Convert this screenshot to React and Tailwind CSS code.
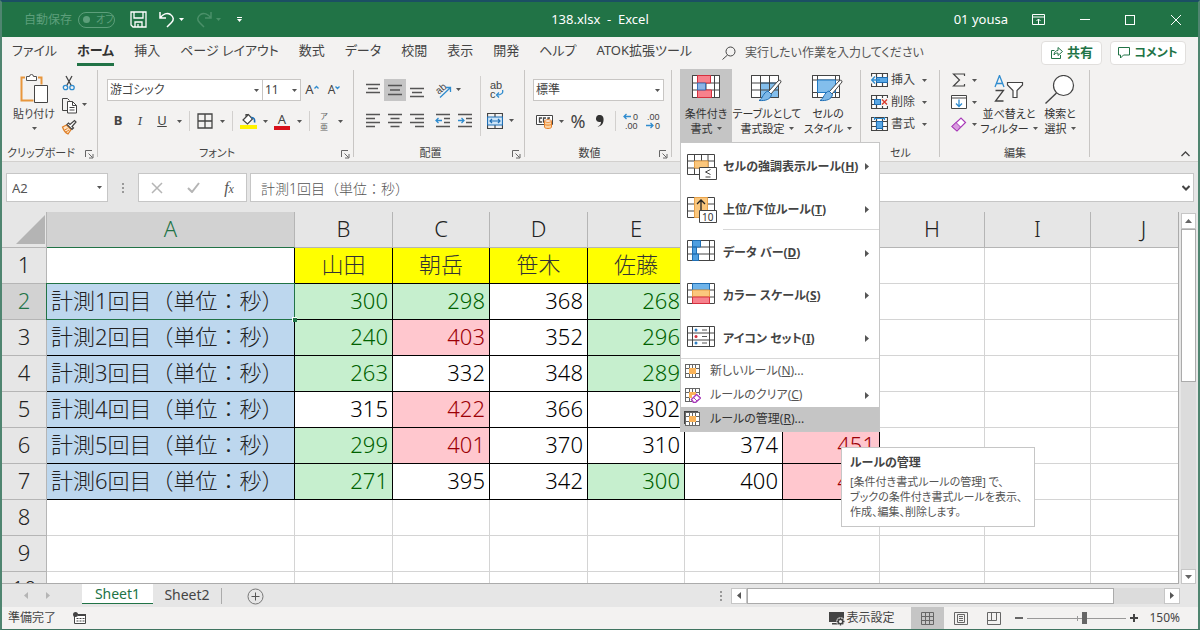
import { useState } from 'react'

const GREEN = '#217346'

// Small shared pieces
const Svg = ({ w = 16, h = 16, children, className = '' }) => (
  <svg width={w} height={h} viewBox={`0 0 ${w} ${h}`} fill="none"
    stroke="#444" strokeWidth="1" className={`shrink-0 ${className}`}>
    {children}
  </svg>
)

const Caret = ({ className = 'text-[#555]' }) => (
  <svg width="5" height="3" viewBox="0 0 5 3" className={`shrink-0 ${className}`}>
    <path d="M0 0h5L2.5 3z" fill="currentColor" />
  </svg>
)

const CaretButton = ({ label, className = 'w-3' }) => (
  <button aria-label={label} className={`flex h-5 items-center justify-center ${className}`}>
    <Caret />
  </button>
)

const Tool = ({ label, active, className = 'w-[22px]', children }) => (
  <button aria-label={label}
    className={`flex h-[22px] shrink-0 items-center justify-center ${active ? 'bg-[#c5c5c5]' : ''} ${className}`}>
    {children}
  </button>
)

const Divider = () => <span className="mx-1 h-5 w-px shrink-0 bg-[#d2d0ce]" />

const Launcher = () => (
  <Svg w={9} h={9}>
    <path d="M.5 7V.5H7M3.5 3.5l4 4M8 4v4H4" stroke="#666" />
  </Svg>
)

const Group = ({ title, launcher, className = '', children }) => (
  <section className={`relative flex shrink-0 flex-col ${className}`}>
    <div className="flex h-[77px] items-start">{children}</div>
    <div className={`relative flex h-4 items-center justify-center text-[11px] text-[#444] ${launcher ? 'pr-[18px]' : ''}`}>
      {title}
      {launcher && (
        <button aria-label={`${title}の設定`} className="absolute right-1 bottom-0.5">
          <Launcher />
        </button>
      )}
    </div>
    <span className="absolute top-0.5 right-0 bottom-1 w-px bg-[#c8c6c4]" />
  </section>
)

// Ribbon icons
const PasteIcon = () => (
  <Svg w={28} h={31}>
    <path d="M5 4.500H1.500v23h12M18 4.500h3.500v7" stroke="#e8963c" strokeWidth="2" />
    <path d="M6.500 7.500v-4h3a2 2 0 014 0h3v4z" fill="#fff" stroke="#555" />
    <path d="M14.500 12.500h13v17h-13z" fill="#fff" />
  </Svg>
)

const CutIcon = () => (
  <Svg w={14} h={16}>
    <path d="M4 1l5.500 10M10 1L4.500 11" strokeWidth="1.300" />
    <circle cx="3.500" cy="12.500" r="2.200" stroke="#2f8ccf" strokeWidth="1.300" />
    <circle cx="10" cy="12.500" r="2.200" stroke="#2f8ccf" strokeWidth="1.300" />
  </Svg>
)

const CopyIcon = () => (
  <Svg w={17} h={17}>
    <path d="M6 13.500H1.500V1.500h5l2 2" />
    <path d="M6.500 4.500h5l4 4v7.500h-9z" fill="#fff" />
    <path d="M11.500 4.500v4h4M8.500 10.500h5M8.500 13h5" />
  </Svg>
)

const BrushIcon = () => (
  <Svg w={16} h={16}>
    <path d="M1.500 8l4-2 4.500 4.500-3 4.500C5 14 2.500 11 1.500 8z" fill="#fde3c4" stroke="#e0812a" strokeWidth="1.300" />
    <path d="M3.500 11l3-1.500M5 13l3-2" stroke="#e0812a" />
    <path d="M6 5.500l5 5 1.500-1.500L11 7.500l4-4.500-1.500-1.500-4.500 4L7.500 4z" fill="#fff" strokeWidth="1.200" />
  </Svg>
)

const LINES = {
  top: 'M1 2.500h14M3 6.500h10M1 10.500h14',
  middle: 'M1 3.500h14M3 8h10M1 12.500h14',
  bottom: 'M1 6.500h14M3 10.500h10M1 14.500h14',
  left: 'M1 1.500h14M1 5.500h9M1 9.500h14M1 13.500h9',
  center: 'M1 1.500h14M3.500 5.500h9M1 9.500h14M3.500 13.500h9',
  right: 'M1 1.500h14M6 5.500h9M1 9.500h14M6 13.500h9',
  indent: 'M1 1.500h14M9 5.500h6M9 9.500h6M1 13.500h14',
}

const Lines = ({ kind, children }) => (
  <Svg>
    <path d={LINES[kind]} stroke="#555" strokeWidth="1.300" />
    {children}
  </Svg>
)

const CondIcon = () => (
  <Svg w={28} h={24}>
    <path d="M.5.500h27v22H.5z" fill="#fff" />
    <path d="M.5.500h27v22H.5zM.5 8h27M.5 15h27M5.500.500v22M22.500.500v22M14 8v7" />
    <path d="M5.500.500h13V8h-13zM5.500 15h14v7.500h-14z" fill="#f7818c" stroke="#d5303e" />
    <path d="M5.500 8h8v7h-8z" fill="#8db4e6" stroke="#3b6fb5" />
  </Svg>
)

const Brush = () => (
  <>
    <path d="M30 7l-10 12-2.500-2.500L27 6q3-2 3 1z" fill="#fff" />
    <path d="M17 16l3.500 3.500c-1 5-6 6.500-12.500 6 4-2 4-8 9-9.500z" fill="#7db8e8" stroke="#1f6fb5" />
  </>
)

const TableIcon = () => (
  <Svg w={32} h={27}>
    <path d="M.5.500h27v22H.5z" fill="#fff" />
    <path d="M9.500 8h18v14.500h-18z" fill="#83beec" stroke="#1f77c0" />
    <path d="M.5.500h27v22H.5zM.5 8h27M.5 15h27M9.500.500v22M18.500.500v22" />
    <Brush />
  </Svg>
)

const CellStyleIcon = () => (
  <Svg w={32} h={27}>
    <path d="M.5.500h27v22H.5z" fill="#fff" />
    <path d="M.5.500h27v22H.5zM.5 5h27M.5 17.500h27M5.500.500v22M23.500.500v22" />
    <path d="M5.500 5h18v12.500h-18z" fill="#83beec" stroke="#1f77c0" />
    <Brush />
  </Svg>
)

const CellOpIcon = ({ kind }) => (
  <Svg w={17} h={15}>
    <path d="M.5.500h16v13H.5zM.5 4.500h16M.5 9.500h16M5.500.500v13M11.500.500v13" fill="#fff" strokeWidth="1.200" />
    {kind === 'insert' && (
      <>
        <path d="M5.500 4.500h11v5h-11z" fill="#5ba8e5" stroke="#1f6fb5" />
        <path d="M0 3.500h5v7H0z" fill="#f3f2f1" stroke="none" />
        <path d="M9 7H1M4 3.500L.7 7 4 10.500" stroke="#2f8ccf" strokeWidth="1.300" />
      </>
    )}
    {kind === 'delete' && (
      <>
        <path d="M3.500 4.500h6v5h-6z" fill="#5ba8e5" stroke="#1f6fb5" />
        <path d="M10 3h7v8h-7z" fill="#f3f2f1" stroke="none" />
        <path d="M11 4.500l5 5M16 4.500l-5 5" stroke="#d93a2b" strokeWidth="1.400" />
      </>
    )}
    {kind === 'format' && (
      <>
        <path d="M5.500 4.500h6v7h-6z" fill="#5ba8e5" stroke="#1f6fb5" />
        <path d="M3.500 0v3M13.500 0v3M4 1.500h9" stroke="#2f8ccf" strokeWidth="1.200" />
      </>
    )}
  </Svg>
)

// Menu icons
const MENU_ART = {
  highlight: (
    <>
      <path d="M.5.500h27v20H.5zM.5 7h27M.5 14h27M7.500.500v20M14.500.500V7M21 .5v20" />
      <path d="M7.500 7H21v7H7.500z" fill="#fbc77d" stroke="#e8a24a" />
      <path d="M12.500 13.500h17v12h-17z" fill="#fff" />
      <path d="M23.500 15.500l-5 2.500 5 2.500M18.500 23h5" />
    </>
  ),
  top: (
    <>
      <path d="M.5.500h27v20H.5zM.5 7h27M.5 14h27" />
      <path d="M7.500.500h13v20h-13z" fill="#fbc77d" stroke="#e8a24a" />
      <path d="M14 13V3M10 7l4-4 4 4" stroke="#222" strokeWidth="1.300" />
      <path d="M12.500 13.500h17v12h-17z" fill="#fff" />
      <text x="15" y="24" fontSize="10" fontWeight="400" fill="#333" stroke="none">10</text>
    </>
  ),
  bars: (
    <>
      <path d="M.5.500h27v20H.5zM.5 7h27M.5 14h27M5.500.500v20M22.500.500v20" />
      <path d="M5.500.500h8V7h-8zM5.500 7h4v7h-4zM5.500 14h6v6.500h-6z" fill="#4f9fe0" stroke="#1f6fb5" />
    </>
  ),
  scale: (
    <>
      <path d="M.5.500h27v20H.5zM.5 7h27M.5 14h27" />
      <path d="M5.500.500h17V7h-17z" fill="#6fb4ea" stroke="#1f6fb5" />
      <path d="M5.500 7h17v7h-17z" fill="#fbc77d" stroke="#e8a24a" />
      <path d="M5.500 14h17v6.500h-17z" fill="#f7818c" stroke="#d5303e" />
    </>
  ),
  icons: (
    <>
      <path d="M.5.500h27v20H.5zM.5 7h27M.5 14h27M5.500.500v20M22.500.500v20" />
      <path d="M15 4h5M15 10.500h5M15 17h5" stroke="#555" />
      <circle cx="9" cy="4" r="1.500" fill="#2f7fc4" stroke="none" />
      <circle cx="9" cy="10.500" r="1.500" fill="#d5303e" stroke="none" />
      <circle cx="9" cy="17" r="1.500" fill="#2f7fc4" stroke="none" />
    </>
  ),
}

const SmallRuleIcon = ({ kind }) => (
  <Svg w={17} h={16}>
    {kind === 'manage' && <path d="M.5 13V.5H14" strokeWidth="1.500" />}
    <path d="M1.500 1.500h14v13h-14z" fill="#fff" />
    <path d="M1.500 1.500h14v13h-14zM1.500 5.500h14M1.500 10.500h14M5.500 1.500v13M11.500 1.500v13M8.500 1.500v4M8.500 10.500v4" stroke="#666" />
    <path d="M5 5h7v6H5z" fill="#fbb45a" stroke="none" />
    {kind === 'clear' && (
      <>
        <path d="M8 8h9v8H8z" fill="#fff" stroke="none" />
        <path d="M7.500 12.500l5-5 4 3.500-5 4.500h-2z" fill="#fff" stroke="#a83ab8" strokeWidth="1.400" />
        <path d="M9.500 10.500l3.500 3.500" stroke="#a83ab8" />
      </>
    )}
  </Svg>
)

const RULES = [
  { art: 'highlight', text: 'セルの強調表示ルール', k: 'H' },
  { art: 'top', text: '上位/下位ルール', k: 'T' },
  { art: 'bars', text: 'データ バー', k: 'D', line: true },
  { art: 'scale', text: 'カラー スケール', k: 'S' },
  { art: 'icons', text: 'アイコン セット', k: 'I' },
]

const RULE_ACTIONS = [
  { kind: 'new', text: '新しいルール', k: 'N', dots: true },
  { kind: 'clear', text: 'ルールのクリア', k: 'C', arrow: true },
  { kind: 'manage', text: 'ルールの管理', k: 'R', dots: true, active: true },
]

const SubArrow = () => (
  <svg width="4" height="7" viewBox="0 0 4 7" className="mr-2.5 ml-auto shrink-0">
    <path d="M0 0l4 3.500L0 7z" fill="#555" />
  </svg>
)

const RulesMenu = () => (
  <div role="menu" className="absolute top-full left-0 z-20 w-[200px] border border-[#c6c6c6] bg-white text-left text-xs">
    {RULES.map(r => (
      <button key={r.k} role="menuitem" className="flex h-[43px] w-full items-center pl-[6px] font-bold text-[#444]">
        <Svg w={30} h={26} className="mt-1">{MENU_ART[r.art]}</Svg>
        <span className={`ml-[6px] flex h-full flex-1 items-center pt-1 ${r.line ? 'border-t border-[#d8d8d8]' : ''}`}>
          <span className="whitespace-nowrap">{r.text}(<u>{r.k}</u>)</span>
          <SubArrow />
        </span>
      </button>
    ))}
    <div className="border-t border-[#d8d8d8]">
      {RULE_ACTIONS.map(a => (
        <button key={a.k} role="menuitem"
          className={`flex h-6 w-full items-center pl-[3px] ${a.active ? 'bg-[#c5c5c5] text-[#333]' : 'text-[#555]'}`}>
          <SmallRuleIcon kind={a.kind} />
          <span className="ml-[9px]">{a.text}(<u>{a.k}</u>){a.dots && '...'}</span>
          {a.arrow && <SubArrow />}
        </button>
      ))}
    </div>

    <div role="tooltip" className="absolute top-[304px] left-40 w-[194px] border border-[#c6c6c6] bg-white px-2 py-[7px] text-xs leading-[15px] text-[#555]">
      <p className="mb-1 font-bold text-[#444]">ルールの管理</p>
      <p className="text-[11px] leading-[15px] whitespace-nowrap">
        [条件付き書式ルールの管理] で、<br />
        ブックの条件付き書式ルールを表示、<br />
        作成、編集、削除します。
      </p>
    </div>
  </div>
)

const BigButton = ({ icon, lines, active, className = '', ...rest }) => (
  <button {...rest}
    className={`flex h-[73px] flex-col items-center pt-[6px] text-[11px] leading-[15px] text-[#333] ${active ? 'bg-[#c5c5c5]' : ''} ${className}`}>
    <span className="flex h-[31px] items-start">{icon}</span>
    <span className="whitespace-nowrap">{lines[0]}</span>
    <span className="flex items-center gap-1 whitespace-nowrap">
      {lines[1]}
      <Caret />
    </span>
  </button>
)

const TitleBar = () => (
  <header className="grid h-[35px] shrink-0 grid-cols-[1fr_auto_1fr] items-center bg-[#217346] text-[13px] text-white">
    <div className="flex items-center pl-[22px] text-xs text-[#5d9f7b]">
      <span>自動保存</span>
      <button aria-label="自動保存" className="ml-1.5 flex h-4 w-[37px] items-center gap-1.5 rounded-full border border-[#5d9f7b] pl-1 text-[10px]">
        <span className="h-[7px] w-[7px] rounded-full bg-[#5d9f7b]" />
        オフ
      </button>
      <button aria-label="上書き保存" className="ml-[15px]">
        <svg width="17" height="17" viewBox="0 0 17 17" fill="none" stroke="#fff" strokeWidth="1.300">
          <path d="M1 1h15v15H3l-2-2zM4 1v6h9V1M5 16v-5h7v5M8 13v3" />
        </svg>
      </button>
      <button aria-label="元に戻す" className="ml-3">
        <svg width="16" height="17" viewBox="0 0 16 17" fill="none" stroke="#fff" strokeWidth="1.500">
          <path d="M1 1v6h6M1.500 6.500C4 3 8 1.500 11.500 3.500c3.500 2.500 3.500 5.500 1 8L8 16" />
        </svg>
      </button>
      <button aria-label="元に戻す履歴" className="ml-1"><Caret className="text-white" /></button>
      <button aria-label="やり直し" className="ml-3">
        <svg width="16" height="17" viewBox="0 0 16 17" fill="none" stroke="#4a9069" strokeWidth="1.500">
          <path d="M15 1v6H9M14.500 6.500C12 3 8 1.500 4.500 3.500c-3.500 2.500-3.500 5.500-1 8L8 16" />
        </svg>
      </button>
      <button aria-label="やり直し履歴" className="ml-1"><Caret className="text-[#4a9069]" /></button>
      <button aria-label="クイック アクセス ツール バーのカスタマイズ" className="ml-4 flex flex-col items-center gap-px">
        <span className="h-px w-[5px] bg-white" />
        <Caret className="text-white" />
      </button>
    </div>
    <h1 className="whitespace-pre">138.xlsx  -  Excel</h1>
    <div className="flex items-center justify-end pr-[17px]">
      <span>01 yousa</span>
      <button aria-label="リボンの表示オプション" className="ml-6">
        <svg width="13" height="11" viewBox="0 0 13 11" fill="none" stroke="#fff">
          <path d="M.5.500h12v10H.5zM.5 3h12M6.500 10V5M4.500 7l2-2 2 2" />
        </svg>
      </button>
      <button aria-label="最小化" className="ml-[35px] h-px w-[10px] bg-white" />
      <button aria-label="最大化" className="ml-[35px] h-[10px] w-[10px] border border-white" />
      <button aria-label="閉じる" className="ml-9">
        <svg width="10" height="10" viewBox="0 0 10 10" stroke="#fff"><path d="M0 0l10 10M10 0L0 10" /></svg>
      </button>
    </div>
  </header>
)

const TABS = ['ファイル', 'ホーム', '挿入', 'ページ レイアウト', '数式', 'データ', '校閲', '表示', '開発', 'ヘルプ', 'ATOK拡張ツール']

const Tabs = () => {
  const [tab, setTab] = useState('ホーム')
  return (
    <div className="flex h-[31px] shrink-0 items-center bg-[#f3f2f1] pr-3 pl-[10px] text-[13px] text-[#444]">
      <nav className="flex gap-5">
        {TABS.map(t => (
          <button key={t} onClick={() => setTab(t)}
            className={`h-[27px] border-b-[3px] whitespace-nowrap ${
              t === tab ? 'border-[#217346] font-bold text-[#333]' : 'border-transparent'
            }`}>
            {t}
          </button>
        ))}
      </nav>
      <label className="ml-[30px] flex flex-1 items-center gap-[9px]">
        <Svg w={14} h={14}>
          <circle cx="8.500" cy="5.500" r="4.500" />
          <path d="M5.500 9L.5 13.500" />
        </Svg>
        <input aria-label="操作アシスト" placeholder="実行したい作業を入力してください"
          className="w-full bg-transparent text-xs outline-none placeholder:text-[#555]" />
      </label>
      <div className="flex gap-2 font-bold text-[#217346]">
        <button className="flex h-6 w-[61px] items-center justify-center gap-1 rounded-sm border border-[#e1dfdd] bg-white">
          <Svg w={13} h={13}>
            <path d="M4.500 4.500h-3v8h9V9M4 9c0-3 2-4.500 4-4.500v-3l4.500 4-4.500 4v-2.500c-2 0-3 .5-4 2z" stroke={GREEN} />
          </Svg>
          共有
        </button>
        <button className="flex h-6 w-[76px] items-center justify-center gap-1 rounded-sm border border-[#e1dfdd] bg-white text-xs">
          <Svg w={12} h={12}><path d="M.5.500h11v7.500H5.500l-3 3V8h-2z" stroke={GREEN} /></Svg>
          コメント
        </button>
      </div>
    </div>
  )
}

const Ribbon = () => (
  <div className="relative flex h-[94px] shrink-0 border-b border-[#d2d0ce] bg-[#f3f2f1] text-[#444]">
    <Group title="クリップボード" launcher className="w-24">
      <button className="ml-2 flex w-12 flex-col items-center pt-[5px] text-[11px] leading-4 whitespace-nowrap">
        <PasteIcon />
        <span className="mt-0.5">貼り付け</span>
        <span className="flex h-3 items-center"><Caret /></span>
      </button>
      <div className="flex flex-col pt-1 text-xs">
        <Tool label="切り取り"><CutIcon /></Tool>
        <div className="flex">
          <Tool label="コピー"><CopyIcon /></Tool>
          <CaretButton label="コピーのオプション" className="w-2" />
        </div>
        <Tool label="書式のコピー/貼り付け"><BrushIcon /></Tool>
      </div>
    </Group>

    <Group title="フォント" launcher className="w-64">
      <div className="flex flex-col gap-[9px] pt-[11px] pl-[9px]">
        <div className="flex items-center text-[13px]">
          <span className="relative flex items-center">
            <select aria-label="フォント" className="h-[22px] w-[156px] appearance-none border border-[#c8c6c4] bg-white px-0.5 text-xs">
              <option>游ゴシック</option>
            </select>
            <Caret className="pointer-events-none absolute right-1 text-[#555]" />
          </span>
          <span className="relative flex items-center">
            <select aria-label="フォント サイズ" className="h-[22px] w-[38px] appearance-none border border-l-0 border-[#c8c6c4] bg-white px-0.5 text-xs">
              <option>11</option>
            </select>
            <Caret className="pointer-events-none absolute right-1 text-[#555]" />
          </span>
          <Tool label="フォント サイズの拡大">
            <span>A</span>
            <Svg w={5} h={10}><path d="M.5 3.500l2-2 2 2" stroke="#2f8ccf" strokeWidth="1.300" /></Svg>
          </Tool>
          <Tool label="フォント サイズの縮小">
            <span className="text-xs">A</span>
            <Svg w={5} h={10}><path d="M.5 1.500l2 2 2-2" stroke="#2f8ccf" strokeWidth="1.300" /></Svg>
          </Tool>
        </div>
        <div className="flex items-center text-[13px]">
          <Tool label="太字"><b>B</b></Tool>
          <Tool label="斜体"><i className="font-serif">I</i></Tool>
          <Tool label="下線"><u>U</u></Tool>
          <CaretButton label="下線のオプション" />
          <Divider />
          <Tool label="罫線"><Svg><path d="M1 1h14v14H1zM8 1v14M1 8h14" strokeWidth="1.300" /></Svg></Tool>
          <CaretButton label="罫線のオプション" />
          <Divider />
          <Tool label="塗りつぶしの色">
            <Svg w={17} h={17}>
              <path d="M8.500 1.500L3 7l4.500 4 5-5-4-4.500zM6 4V1.500h2" fill="#fff" strokeWidth="1.200" />
              <path d="M11 4.500c3-.5 4 2 3.500 5" stroke="#1f6fb5" strokeWidth="1.600" />
              <path d="M0 12h17v4H0z" fill="#fff200" stroke="none" />
            </Svg>
          </Tool>
          <CaretButton label="塗りつぶしの色のオプション" />
          <Tool label="フォントの色" className="w-[22px] flex-col">
            <span className="leading-[13px]">A</span>
            <span className="h-1 w-4 bg-[#d8111b]" />
          </Tool>
          <CaretButton label="フォントの色のオプション" />
          <Divider />
          <Tool label="ふりがな" className="w-5 flex-col text-[8px] leading-[11px] text-[#666]">
            <span>ア</span>
            <span>亜</span>
          </Tool>
          <CaretButton label="ふりがなのオプション" />
        </div>
      </div>
    </Group>

    <Group title="配置" launcher className="w-[171px]">
      <div className="flex flex-col gap-[9px] pt-[11px] pl-2">
        <div className="flex">
          <Tool label="上揃え"><Lines kind="top" /></Tool>
          <Tool label="上下中央揃え" active><Lines kind="middle" /></Tool>
          <Tool label="下揃え"><Lines kind="bottom" /></Tool>
          <Tool label="方向" className="ml-1 w-[22px]">
            <Svg w={18} h={20} className="font-['Liberation_Sans',sans-serif]">
              <text x="2" y="13" fontSize="10" fill="#444" stroke="none" transform="rotate(-40 6 10)">ab</text>
              <path d="M6 17.500L16 8M12 7.500h4.500V12" stroke="#2f8ccf" strokeWidth="1.300" />
            </Svg>
          </Tool>
          <CaretButton label="方向のオプション" className="w-2" />
        </div>
        <div className="flex">
          <Tool label="左揃え"><Lines kind="left" /></Tool>
          <Tool label="中央揃え"><Lines kind="center" /></Tool>
          <Tool label="右揃え"><Lines kind="right" /></Tool>
          <Tool label="インデントを減らす" className="ml-1 w-[22px]">
            <Lines kind="indent"><path d="M7 7.500H1M3.500 5L1 7.500 3.500 10" stroke="#2f8ccf" strokeWidth="1.300" /></Lines>
          </Tool>
          <Tool label="インデントを増やす">
            <Lines kind="indent"><path d="M1 7.500h6M4.500 5L7 7.500 4.500 10" stroke="#2f8ccf" strokeWidth="1.300" /></Lines>
          </Tool>
        </div>
      </div>
      <span className="mt-2 ml-1 h-[60px] w-px bg-[#d2d0ce]" />
      <div className="flex flex-col gap-[9px] pt-[11px] pl-1">
        <Tool label="折り返して全体を表示する">
          <Svg w={15} h={22} className="font-['Liberation_Sans',sans-serif]">
            <text x="1" y="10" fontSize="11" fill="#444" stroke="none">ab</text>
            <text x="1" y="19" fontSize="11" fill="#444" stroke="none">c</text>
            <path d="M13.500 11c1 3-1 5-6 5M10 13.500L7.500 16l2.500 2.500" stroke="#2f8ccf" strokeWidth="1.300" />
          </Svg>
        </Tool>
        <div className="flex">
          <Tool label="セルを結合して中央揃え" className="w-5">
            <Svg>
              <path d="M.5.500h15v15H.5zM8 .5V4M8 12v3.500" strokeWidth="1.200" />
              <path d="M.5 4h15v8H.5z" fill="#cfe6f8" stroke="#1f6fb5" strokeWidth="1.200" />
              <path d="M3 8h10M5 6L3 8l2 2M11 6l2 2-2 2" stroke="#1f6fb5" strokeWidth="1.200" />
            </Svg>
          </Tool>
          <CaretButton label="結合のオプション" />
        </div>
      </div>
    </Group>

    <Group title="数値" launcher className="w-[147px]">
      <div className="flex flex-col gap-[9px] pt-[11px] pl-2">
        <span className="relative flex items-center">
          <select aria-label="表示形式" className="h-[22px] w-[131px] appearance-none border border-[#c8c6c4] bg-white px-0.5 text-xs">
            <option>標準</option>
          </select>
          <Caret className="pointer-events-none absolute right-1 text-[#555]" />
        </span>
        <div className="flex items-center">
          <Tool label="通貨表示形式">
            <Svg w={17} h={15}>
              <path d="M.5 1.500h16v9H.5z" fill="#fff" />
              <path d="M6 4H3.500v4H6M10 4H7.500v4H9M14 4h-2v2" strokeWidth="1.300" />
              <path d="M8.500 7v6c0 2 7 2 7 0V7" fill="#fbd3a2" stroke="#e8812a" />
              <ellipse cx="12" cy="7" rx="3.500" ry="1.300" fill="#fff" stroke="#e8812a" />
              <path d="M8.500 10c0 1.500 7 1.500 7 0" stroke="#e8812a" />
            </Svg>
          </Tool>
          <CaretButton label="通貨のオプション" />
          <Tool label="パーセント スタイル" className="w-[22px] text-lg">%</Tool>
          <Tool label="桁区切りスタイル">
            <svg width="8" height="12" viewBox="0 0 8 12"><path d="M4 0a3.500 3.500 0 00-1 7c.8.2 1.500 0 2-.3C5 9 4 10.500 1.500 11.500c4 0 6.500-3.500 6-8C7.300 1.500 6 0 4 0z" fill="#333" /></svg>
          </Tool>
          <Divider />
          <Tool label="小数点以下の表示桁数を増やす">
            <Svg w={16} h={20} className="font-['Liberation_Sans',sans-serif]">
              <text x="10" y="9" fontSize="9" fill="#444" stroke="none">0</text>
              <text x="2" y="18" fontSize="9" fill="#444" stroke="none">.00</text>
              <path d="M8 5.500H1M3.500 3L1 5.500 3.500 8" stroke="#2f8ccf" strokeWidth="1.300" />
            </Svg>
          </Tool>
          <Tool label="小数点以下の表示桁数を減らす">
            <Svg w={16} h={20} className="font-['Liberation_Sans',sans-serif]">
              <text x="2" y="9" fontSize="9" fill="#444" stroke="none">.00</text>
              <text x="10" y="18" fontSize="9" fill="#444" stroke="none">0</text>
              <path d="M1 14.500h7M5.500 12L8 14.500 5.500 17" stroke="#2f8ccf" strokeWidth="1.300" />
            </Svg>
          </Tool>
        </div>
      </div>
    </Group>

    <Group title="" className="w-[189px]">
      <div className="relative ml-2 pt-px">
        <BigButton icon={<CondIcon />} lines={['条件付き', '書式']} active className="w-[52px]"
          aria-haspopup="menu" aria-expanded="true" />
        <RulesMenu />
      </div>
      <div className="flex pt-px">
        <BigButton icon={<TableIcon />} lines={['テーブルとして', '書式設定']} className="w-[70px]" />
        <BigButton icon={<CellStyleIcon />} lines={['セルの', 'スタイル']} className="w-[52px]" />
      </div>
    </Group>

    <Group title="セル" className="w-[79px]">
      <div className="flex flex-col pt-[1px] pl-[10px] text-xs">
        {[['insert', '挿入'], ['delete', '削除'], ['format', '書式']].map(([kind, text]) => (
          <button key={kind} className="flex h-[22px] items-center gap-[3px]">
            <CellOpIcon kind={kind} />
            {text}
            <span className="ml-1"><Caret /></span>
          </button>
        ))}
      </div>
    </Group>

    <Group title="編集" className="w-[150px]">
      <div className="flex flex-col pt-[1px] pl-2">
        <div className="flex items-center">
          <Tool label="オート SUM"><Svg w={14} h={14}><path d="M12.500 3V1h-11l6 6-6 6h11v-2" strokeWidth="1.200" /></Svg></Tool>
          <CaretButton label="合計のオプション" className="w-2" />
        </div>
        <div className="flex items-center">
          <Tool label="フィル">
            <Svg w={16} h={14}>
              <path d="M.5.500h15v13H.5zM.5 3h15" fill="#fff" />
              <path d="M8 4.500v7M5 8.500l3 3 3-3" stroke="#2f8ccf" strokeWidth="1.300" />
            </Svg>
          </Tool>
          <CaretButton label="フィルのオプション" className="w-2" />
        </div>
        <div className="flex items-center">
          <Tool label="クリア">
            <Svg w={16} h={15}>
              <path d="M1 9.500L10 1l4.500 4.500L6 14z" fill="#fff" stroke="#a83ab8" strokeWidth="1.200" />
              <path d="M1 9.500l4-4L9.500 10 6 14z" fill="#d99be0" stroke="#a83ab8" />
            </Svg>
          </Tool>
          <CaretButton label="クリアのオプション" className="w-2" />
        </div>
      </div>
      <div className="flex pt-px pl-1">
        <BigButton className="w-[54px]" lines={['並べ替えと', 'フィルター']} icon={
          <Svg w={30} h={28}>
            <path d="M1 12L5.500.5 10 12M2.500 8.500h6" stroke="#2f8ccf" strokeWidth="1.300" />
            <path d="M1.500 15.500h8l-8 10.500h8" strokeWidth="1.300" />
            <path d="M13.500 7.500h15v2.500l-5.500 5.500v7h-4v-7L13.500 10z" fill="#fff" strokeWidth="1.200" />
          </Svg>
        } />
        <BigButton className="w-12" lines={['検索と', '選択']} icon={
          <Svg w={30} h={30}>
            <circle cx="18.500" cy="10.500" r="10" fill="#fff" strokeWidth="1.200" />
            <path d="M11.500 18L.5 28.500" strokeWidth="1.400" />
          </Svg>
        } />
      </div>
    </Group>

    <button aria-label="リボンを折りたたむ" className="mt-auto mr-2 mb-1 ml-auto">
      <Svg w={9} h={6}><path d="M.5 5l4-4 4 4" strokeWidth="1.300" /></Svg>
    </button>
  </div>
)

const Dots = () => (
  <span className="flex flex-col gap-[2px]">
    <i className="h-[2px] w-[2px] bg-[#999]" />
    <i className="h-[2px] w-[2px] bg-[#999]" />
    <i className="h-[2px] w-[2px] bg-[#999]" />
  </span>
)

const FormulaBar = () => (
  <div className="flex h-[50px] shrink-0 items-start bg-[#e6e6e6] pt-[11px] pr-1 pl-1 text-[13px] text-[#555]">
    <span className="relative flex items-center">
      <input aria-label="名前ボックス" defaultValue="A2" className="h-[29px] w-[102px] border border-[#c6c6c6] bg-white px-[5px] outline-none" />
      <button aria-label="名前の一覧" className="absolute right-1.5"><Caret /></button>
    </span>
    <span className="flex h-[29px] w-[30px] items-center justify-center"><Dots /></span>
    <div className="flex h-[29px] w-[109px] shrink-0 items-center justify-around border border-[#c6c6c6] bg-white">
      <button aria-label="キャンセル"><Svg w={12} h={12}><path d="M1 1l10 10M11 1L1 11" stroke="#b5b5b5" strokeWidth="1.500" /></Svg></button>
      <button aria-label="入力"><Svg w={13} h={11}><path d="M1 6l4 4 7-9" stroke="#b5b5b5" strokeWidth="2" /></Svg></button>
      <button aria-label="関数の挿入" className="font-['Liberation_Serif',serif] text-base italic">f<span className="text-xs">x</span></button>
    </div>
    <span className="relative ml-[3px] flex flex-1 items-center">
      <input aria-label="数式バー" defaultValue="計測1回目（単位：秒）"
        className="h-[29px] w-full border border-[#c6c6c6] bg-white px-2.5 text-sm font-light outline-none [font-feature-settings:normal]" />
      <button aria-label="数式バーの展開" className="absolute right-1">
        <Svg w={8} h={6}><path d="M.5 1L4 4.500 7.500 1" strokeWidth="2" /></Svg>
      </button>
    </span>
  </div>
)

// Sheet data
const COLS = [
  ['A', 'w-[248px]'], ['B', 'w-[98px]'], ['C', 'w-[97px]'], ['D', 'w-[98px]'], ['E', 'w-[97px]'],
  ['F', 'w-[98px]'], ['G', 'w-[97px]'], ['H', 'w-[105px]'], ['I', 'w-[106px]'], ['J', 'w-[106px]'],
]

const ROWS = [
  ['', '山田', '朝岳', '笹木', '佐藤', '', ''],
  ['計測1回目（単位：秒）', 300, 298, 368, 268, '', ''],
  ['計測2回目（単位：秒）', 240, 403, 352, 296, '', ''],
  ['計測3回目（単位：秒）', 263, 332, 348, 289, '', ''],
  ['計測4回目（単位：秒）', 315, 422, 366, 302, '', ''],
  ['計測5回目（単位：秒）', 299, 401, 370, 310, 374, 451],
  ['計測6回目（単位：秒）', 271, 395, 342, 300, 400, 410],
  [], [], [],
]

const cellClass = (value, row, col) => {
  if (row > 6 || col > 6) return 'border-[#d4d4d4]'
  if (row === 0) return col === 0 ? 'border-black bg-white' : 'border-black bg-[#ffff00] text-center text-[#333]'
  if (col === 0) return 'border-black bg-[#bdd7ee] pl-1 text-left text-[#222]'
  if (value && value <= 300) return 'border-black bg-[#c6efce] pr-1 text-right text-[#006100]'
  if (value > 400) return 'border-black bg-[#ffc7ce] pr-1 text-right text-[#9c0006]'
  return 'border-black bg-white pr-1 text-right text-black'
}

const Sheet = () => (
  <div className="flex min-h-0 flex-1 bg-[#e6e6e6]">
    <div className="min-w-0 flex-1 overflow-hidden border-r border-b border-[#ababab]">
      <table className="w-[1195px] table-fixed border-separate border-spacing-0 bg-white text-[22px] leading-none font-light [font-feature-settings:normal]">
        <colgroup>
          <col className="w-[45px]" />
          {COLS.map(([name, width]) => <col key={name} className={width} />)}
        </colgroup>
        <thead>
          <tr className="h-9 bg-[#e6e6e6] text-[#222]">
            <th aria-label="すべて選択" className="border-r border-b border-[#b5b5b5] p-0">
              <svg width="30" height="29" viewBox="0 0 30 29" className="ml-auto"><path d="M29 0v29H0z" fill="#b4b4b4" /></svg>
            </th>
            {COLS.map(([name], i) => (
              <th key={name} scope="col" className={`border-r border-b p-0 pb-[3px] font-light ${
                i === 0 ? 'border-r-[#b5b5b5] border-b-[#217346] bg-[#d2d2d2] text-[#217346]' : 'border-[#b5b5b5]'
              }`}>
                {name}
              </th>
            ))}
          </tr>
        </thead>
        <tbody>
          {ROWS.map((row, r) => (
            <tr key={r} className="h-9">
              <th scope="row" className={`border-r border-b border-[#b5b5b5] p-0 pb-[3px] font-light ${
                r === 1 ? 'bg-[#d2d2d2] text-[#217346]' : 'bg-[#e6e6e6] text-[#222]'
              }`}>
                {r + 1}
              </th>
              {COLS.map(([name], c) => (
                <td key={name} className={`relative border-r border-b p-0 pb-[3px] whitespace-nowrap ${cellClass(row[c], r, c)}`}>
                  {row[c]}
                  {r === 1 && c === 0 && (
                    <span className="absolute -inset-px border border-[#217346]">
                      <span className="absolute -right-[3px] -bottom-[3px] z-10 h-[5px] w-[5px] border-t border-l border-white bg-[#217346]" />
                    </span>
                  )}
                </td>
              ))}
            </tr>
          ))}
        </tbody>
      </table>
    </div>

    {/* Vertical scrollbar */}
    <div className="flex w-[19px] flex-col items-center pt-px">
      <button aria-label="上へスクロール" className="flex h-4 w-[15px] shrink-0 items-center justify-center border border-[#c6c6c6] bg-white">
        <svg width="7" height="4" viewBox="0 0 7 4"><path d="M0 4h7L3.500 0z" fill="#666" /></svg>
      </button>
      <div className="w-[15px] flex-1 bg-[#dcdcdc]">
        <div className="h-[45%] border border-[#ababab] bg-white" />
      </div>
      <button aria-label="下へスクロール" className="flex h-[15px] w-[15px] shrink-0 items-center justify-center border border-[#c6c6c6] bg-white">
        <svg width="7" height="4" viewBox="0 0 7 4"><path d="M0 0h7L3.500 4z" fill="#666" /></svg>
      </button>
    </div>
  </div>
)

const SideArrow = ({ flip, color }) => (
  <svg width="4" height="7" viewBox="0 0 4 7"><path d={flip ? 'M4 0v7L0 3.500z' : 'M0 0v7l4-3.500z'} fill={color} /></svg>
)

const SheetTabs = () => (
  <div className="grid h-[23px] shrink-0 grid-cols-[3fr_2fr] bg-[#e6e6e6] text-sm">
    <div className="flex items-start">
      <div className="flex h-[22px] w-20 items-center gap-[18px] pl-[22px]">
        <button aria-label="前のシート"><SideArrow flip color="#b5b5b5" /></button>
        <button aria-label="次のシート"><SideArrow color="#b5b5b5" /></button>
      </div>
      <button className="h-[20px] w-[71px] border-b border-[#217346] bg-white leading-[19px] text-[#217346]">Sheet1</button>
      <button className="h-[20px] w-[68px] leading-[19px] text-[#444]">Sheet2</button>
      <span className="mt-1 h-4 w-px bg-[#ababab]" />
      <button aria-label="新しいシート" className="mt-1 ml-[25px]">
        <Svg w={17} h={17}>
          <circle cx="8.500" cy="8.500" r="7.500" stroke="#777" />
          <path d="M4.500 8.500h8M8.500 4.500v8" stroke="#555" />
        </Svg>
      </button>
    </div>
    <div className="flex items-center pr-[18px]">
      <Dots />
      <button aria-label="左へスクロール" className="ml-[9px] flex h-4 w-4 items-center justify-center border border-[#c6c6c6] bg-white">
        <SideArrow flip color="#555" />
      </button>
      <div className="h-4 flex-1 bg-[#dcdcdc]">
        <div className="h-full w-[88%] border border-[#ababab] bg-white" />
      </div>
      <button aria-label="右へスクロール" className="flex h-4 w-4 items-center justify-center border border-[#c6c6c6] bg-white">
        <SideArrow color="#555" />
      </button>
    </div>
  </div>
)

const StatusBar = () => (
  <footer className="flex h-[22px] shrink-0 items-center bg-[#f3f2f1] pr-[18px] pl-1.5 text-xs text-[#444]">
    <span>準備完了</span>
    <button aria-label="マクロの記録" className="ml-[17px]">
      <Svg w={13} h={12}>
        <path d="M1.500 2.500h11v9h-11z" fill="#fff" />
        <path d="M5 2h8v2H5z" fill="#444" stroke="none" />
        <circle cx="2.500" cy="2.500" r="2.500" fill="#444" stroke="none" />
        <path d="M3.500 6.500h8M3.500 9h8" strokeDasharray="2 1" />
      </Svg>
    </button>
    <button className="ml-auto flex items-center gap-px">
      <Svg w={16} h={15}>
        <path d="M0 1h15v10H0zM3 12h6v1.500H3z" fill="#444" stroke="none" />
        <circle cx="11.500" cy="10.500" r="4.300" fill="#f3f2f1" stroke="none" />
        <circle cx="11.500" cy="10.500" r="2.300" strokeWidth="1.500" />
        <path d="M11.500 6.500v8M7.500 10.500h8M8.700 7.700l5.600 5.600M14.300 7.700l-5.600 5.600" strokeDasharray="1.500 5" strokeWidth="1.400" />
      </Svg>
      表示設定
    </button>
    <div className="ml-[17px] flex h-full">
      <button aria-label="標準" className="flex w-[33px] items-center justify-center bg-[#c5c5c5]">
        <Svg w={13} h={13}><path d="M.5.500h12v12H.5zM.5 4.500h12M.5 8.500h12M4.500.500v12M8.500.500v12" stroke="#666" /></Svg>
      </button>
      <button aria-label="ページ レイアウト" className="flex w-[33px] items-center justify-center">
        <Svg w={14} h={13}><path d="M.5.500h13v12H.5zM3.500 2.500h7v8h-7zM5 4.500h4M5 6.500h4M5 8.500h4" stroke="#666" /></Svg>
      </button>
      <button aria-label="改ページ プレビュー" className="flex w-[33px] items-center justify-center">
        <Svg w={14} h={13}><path d="M.5.500h13v12H.5zM.5 8.500h9M4.500.500v8M9.500.500v8" stroke="#666" /></Svg>
      </button>
    </div>
    <button aria-label="縮小" className="ml-[5px] h-[2px] w-2 bg-[#666]" />
    <span className="relative mx-1 flex w-[99px] items-center">
      <span className="absolute left-1/2 h-[5px] w-px bg-[#999]" />
      <input type="range" aria-label="ズーム" min="0" max="100" defaultValue="58"
        className="h-px w-full appearance-none bg-[#999] [&::-webkit-slider-thumb]:h-3 [&::-webkit-slider-thumb]:w-[5px] [&::-webkit-slider-thumb]:appearance-none [&::-webkit-slider-thumb]:bg-[#666]" />
    </span>
    <button aria-label="拡大"><Svg w={8} h={8}><path d="M0 4h8M4 0v8" strokeWidth="2" /></Svg></button>
    <span className="ml-[11px]">150%</span>
  </footer>
)

export default function App() {
  return (
    <div className="flex h-screen flex-col overflow-hidden border-x-2 border-t-2 border-b border-x-[#4f8570] border-t-[#1b4f63] border-b-[#3f7460] bg-[#f3f2f1] font-['Noto_Sans','Noto_Sans_CJK_JP',sans-serif] [font-feature-settings:'palt']">
      <TitleBar />
      <Tabs />
      <Ribbon />
      <FormulaBar />
      <Sheet />
      <SheetTabs />
      <StatusBar />
    </div>
  )
}
